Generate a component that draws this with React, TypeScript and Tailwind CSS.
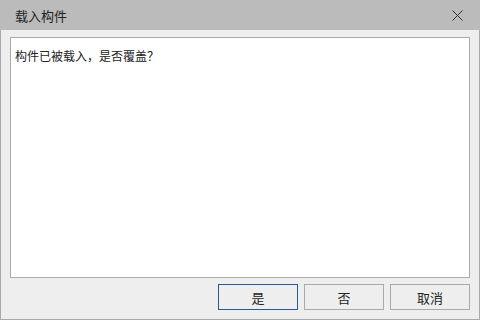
import React from "react";

export default function App() {
  const font = { fontFamily: '"Noto Sans CJK SC", "Noto Sans", sans-serif' };
  return (
    <div className="w-[480px] h-[320px] flex flex-col bg-[#eeeeee] text-[#222222]" style={font}>
      <div className="h-[30px] shrink-0 bg-[#bbbbbb] flex items-center justify-between pl-[15px] pr-[17px]">
        <span className="text-[13px] leading-none">载入构件</span>
        <svg width="11" height="11" viewBox="0 0 11 11" className="block">
          <path d="M0.5 0.5 L10.5 10.5 M10.5 0.5 L0.5 10.5" stroke="#333333" strokeWidth="1" fill="none" />
        </svg>
      </div>
      <div className="flex-1 flex flex-col border-x border-b border-[#aaaaaa] px-[9px] pt-[7px] pb-[9px]">
        <div className="h-[241px] bg-white border border-[#aaaaaa] px-[4px] pt-[4px]">
          <span className="text-[12px] leading-[17px]">构件已被载入，是否覆盖？</span>
        </div>
        <div className="flex justify-end gap-[6px] mt-[6px]">
          <button className="w-[80px] h-[26px] border border-[#2b5797] bg-[#eeeeee] text-[13px] leading-none">是</button>
          <button className="w-[80px] h-[26px] border border-[#aaaaaa] bg-[#eeeeee] text-[13px] leading-none">否</button>
          <button className="w-[80px] h-[26px] border border-[#aaaaaa] bg-[#eeeeee] text-[13px] leading-none">取消</button>
        </div>
      </div>
    </div>
  );
}
